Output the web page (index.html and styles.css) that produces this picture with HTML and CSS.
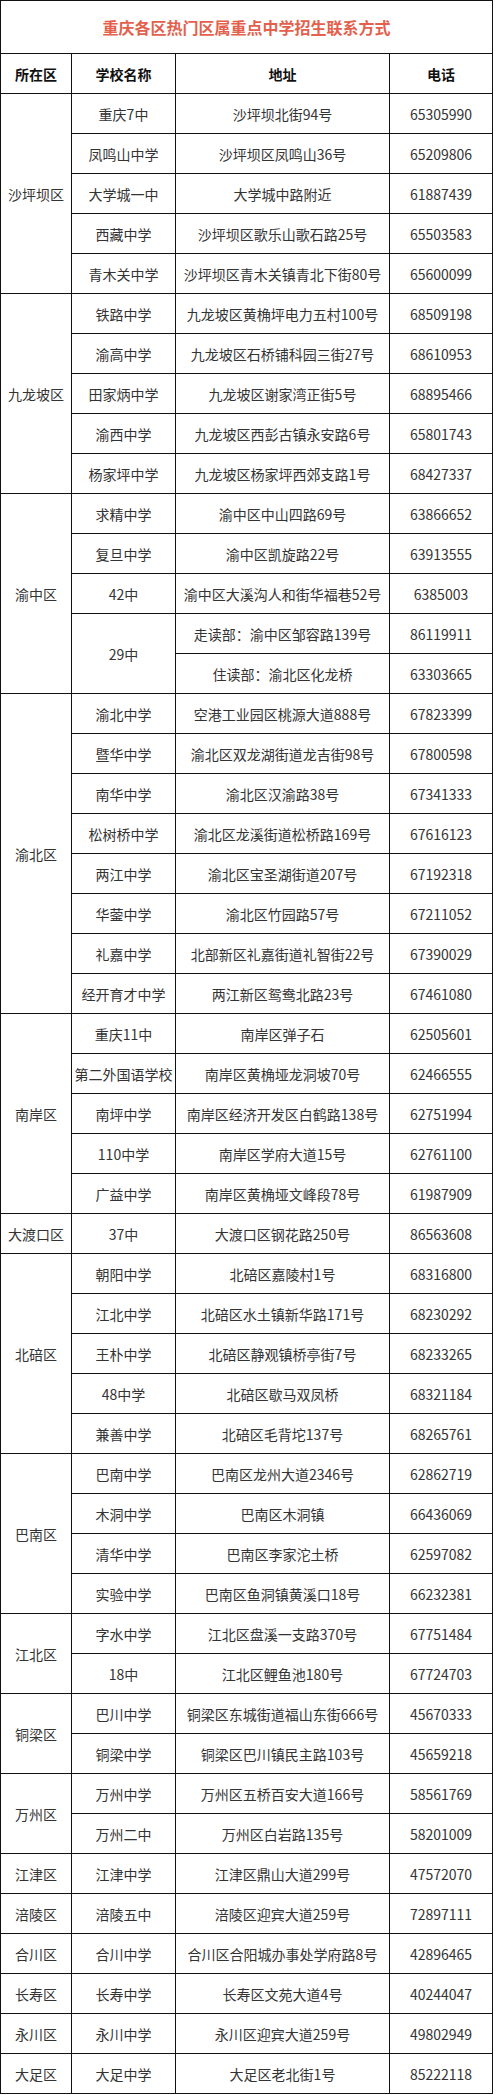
FILE: index.html
```html
<!DOCTYPE html>
<html lang="zh-CN">
<head>
<meta charset="utf-8">
<title>重庆各区热门区属重点中学招生联系方式</title>
<link rel="stylesheet" href="styles.css">
</head>
<body>
<table class="schools">
  <colgroup>
    <col class="c-district">
    <col class="c-name">
    <col class="c-addr">
    <col class="c-phone">
  </colgroup>
  <thead>
    <tr class="title-row"><th colspan="4" class="title">重庆各区热门区属重点中学招生联系方式</th></tr>
    <tr class="head-row"><th>所在区</th><th>学校名称</th><th>地址</th><th>电话</th></tr>
  </thead>
  <tbody>
    <tr><td rowspan="5">沙坪坝区</td><td>重庆7中</td><td>沙坪坝北街94号</td><td>65305990</td></tr>
    <tr><td>凤鸣山中学</td><td>沙坪坝区凤鸣山36号</td><td>65209806</td></tr>
    <tr><td>大学城一中</td><td>大学城中路附近</td><td>61887439</td></tr>
    <tr><td>西藏中学</td><td>沙坪坝区歌乐山歌石路25号</td><td>65503583</td></tr>
    <tr><td>青木关中学</td><td>沙坪坝区青木关镇青北下街80号</td><td>65600099</td></tr>

    <tr><td rowspan="5">九龙坡区</td><td>铁路中学</td><td>九龙坡区黄桷坪电力五村100号</td><td>68509198</td></tr>
    <tr><td>渝高中学</td><td>九龙坡区石桥铺科园三街27号</td><td>68610953</td></tr>
    <tr><td>田家炳中学</td><td>九龙坡区谢家湾正街5号</td><td>68895466</td></tr>
    <tr><td>渝西中学</td><td>九龙坡区西彭古镇永安路6号</td><td>65801743</td></tr>
    <tr><td>杨家坪中学</td><td>九龙坡区杨家坪西郊支路1号</td><td>68427337</td></tr>

    <tr><td rowspan="5">渝中区</td><td>求精中学</td><td>渝中区中山四路69号</td><td>63866652</td></tr>
    <tr><td>复旦中学</td><td>渝中区凯旋路22号</td><td>63913555</td></tr>
    <tr><td>42中</td><td>渝中区大溪沟人和街华福巷52号</td><td>6385003</td></tr>
    <tr><td rowspan="2">29中</td><td>走读部：渝中区邹容路139号</td><td>86119911</td></tr>
    <tr><td>住读部：渝北区化龙桥</td><td>63303665</td></tr>

    <tr><td rowspan="8">渝北区</td><td>渝北中学</td><td>空港工业园区桃源大道888号</td><td>67823399</td></tr>
    <tr><td>暨华中学</td><td>渝北区双龙湖街道龙吉街98号</td><td>67800598</td></tr>
    <tr><td>南华中学</td><td>渝北区汉渝路38号</td><td>67341333</td></tr>
    <tr><td>松树桥中学</td><td>渝北区龙溪街道松桥路169号</td><td>67616123</td></tr>
    <tr><td>两江中学</td><td>渝北区宝圣湖街道207号</td><td>67192318</td></tr>
    <tr><td>华蓥中学</td><td>渝北区竹园路57号</td><td>67211052</td></tr>
    <tr><td>礼嘉中学</td><td>北部新区礼嘉街道礼智街22号</td><td>67390029</td></tr>
    <tr><td>经开育才中学</td><td>两江新区鸳鸯北路23号</td><td>67461080</td></tr>

    <tr><td rowspan="5">南岸区</td><td>重庆11中</td><td>南岸区弹子石</td><td>62505601</td></tr>
    <tr><td>第二外国语学校</td><td>南岸区黄桷垭龙洞坡70号</td><td>62466555</td></tr>
    <tr><td>南坪中学</td><td>南岸区经济开发区白鹤路138号</td><td>62751994</td></tr>
    <tr><td>110中学</td><td>南岸区学府大道15号</td><td>62761100</td></tr>
    <tr><td>广益中学</td><td>南岸区黄桷垭文峰段78号</td><td>61987909</td></tr>

    <tr><td>大渡口区</td><td>37中</td><td>大渡口区钢花路250号</td><td>86563608</td></tr>

    <tr><td rowspan="5">北碚区</td><td>朝阳中学</td><td>北碚区嘉陵村1号</td><td>68316800</td></tr>
    <tr><td>江北中学</td><td>北碚区水土镇新华路171号</td><td>68230292</td></tr>
    <tr><td>王朴中学</td><td>北碚区静观镇桥亭街7号</td><td>68233265</td></tr>
    <tr><td>48中学</td><td>北碚区歇马双凤桥</td><td>68321184</td></tr>
    <tr><td>兼善中学</td><td>北碚区毛背坨137号</td><td>68265761</td></tr>

    <tr><td rowspan="4">巴南区</td><td>巴南中学</td><td>巴南区龙州大道2346号</td><td>62862719</td></tr>
    <tr><td>木洞中学</td><td>巴南区木洞镇</td><td>66436069</td></tr>
    <tr><td>清华中学</td><td>巴南区李家沱土桥</td><td>62597082</td></tr>
    <tr><td>实验中学</td><td>巴南区鱼洞镇黄溪口18号</td><td>66232381</td></tr>

    <tr><td rowspan="2">江北区</td><td>字水中学</td><td>江北区盘溪一支路370号</td><td>67751484</td></tr>
    <tr><td>18中</td><td>江北区鲤鱼池180号</td><td>67724703</td></tr>

    <tr><td rowspan="2">铜梁区</td><td>巴川中学</td><td>铜梁区东城街道福山东街666号</td><td>45670333</td></tr>
    <tr><td>铜梁中学</td><td>铜梁区巴川镇民主路103号</td><td>45659218</td></tr>

    <tr><td rowspan="2">万州区</td><td>万州中学</td><td>万州区五桥百安大道166号</td><td>58561769</td></tr>
    <tr><td>万州二中</td><td>万州区白岩路135号</td><td>58201009</td></tr>

    <tr><td>江津区</td><td>江津中学</td><td>江津区鼎山大道299号</td><td>47572070</td></tr>
    <tr><td>涪陵区</td><td>涪陵五中</td><td>涪陵区迎宾大道259号</td><td>72897111</td></tr>
    <tr><td>合川区</td><td>合川中学</td><td>合川区合阳城办事处学府路8号</td><td>42896465</td></tr>
    <tr><td>长寿区</td><td>长寿中学</td><td>长寿区文苑大道4号</td><td>40244047</td></tr>
    <tr><td>永川区</td><td>永川中学</td><td>永川区迎宾大道259号</td><td>49802949</td></tr>
    <tr><td>大足区</td><td>大足中学</td><td>大足区老北街1号</td><td>85222118</td></tr>
  </tbody>
</table>
</body>
</html>
```

FILE: styles.css
```css
html, body {
  margin: 0;
  padding: 0;
  background: #ffffff;
}

body {
  font-family: "Noto Sans CJK SC", "Noto Sans", sans-serif;
  font-size: 14px;
  color: #333333;
}

.schools {
  width: 493px;
  border-collapse: collapse;
  table-layout: fixed;
}

.c-district { width: 71px; }
.c-name { width: 104px; }
.c-addr { width: 214px; }
.c-phone { width: 103px; }

.schools th,
.schools td {
  border: 1px solid #111111;
  padding: 0;
  text-align: center;
  vertical-align: middle;
  line-height: 20px;
  white-space: nowrap;
}

.schools tbody tr,
.head-row {
  height: 40px;
}

.title-row {
  height: 53px;
}

.title {
  font-size: 16px;
  font-weight: 700;
  color: #e4604c;
}

.head-row th {
  font-weight: 700;
  color: #111111;
}
```
